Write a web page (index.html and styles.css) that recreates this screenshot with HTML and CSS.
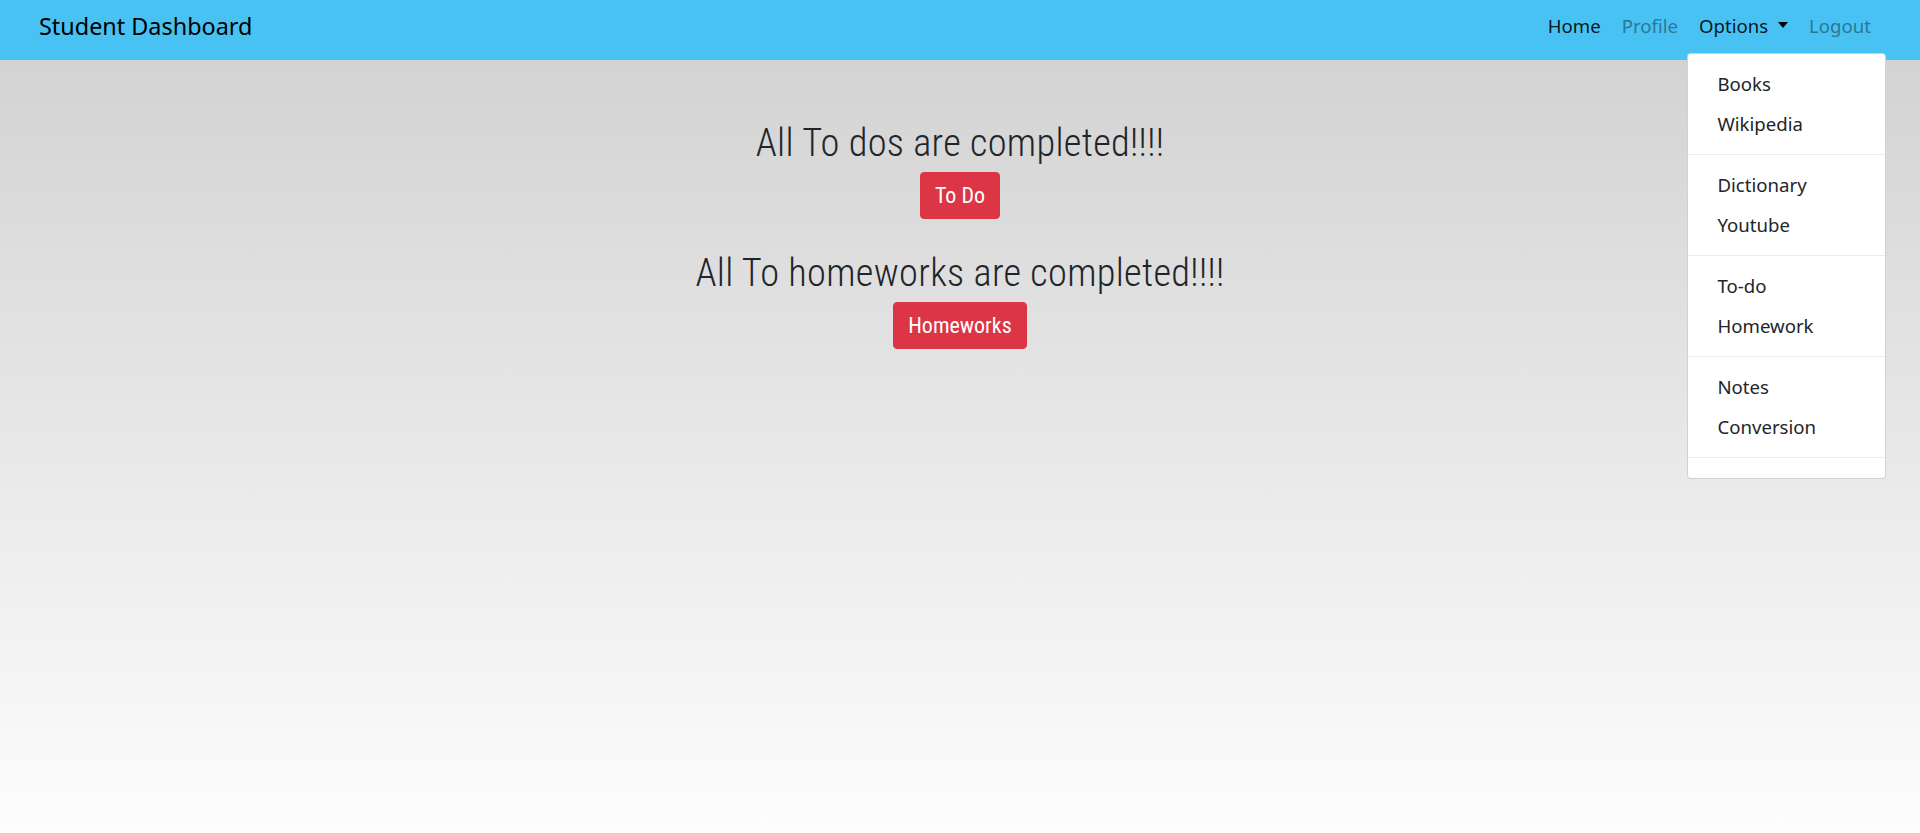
FILE: index.html
```html
<!DOCTYPE html>
<html lang="en">
<head>
<meta charset="utf-8">
<title>Student Dashboard</title>
<link rel="stylesheet" href="styles.css">
</head>
<body>
<nav class="navbar">
  <a class="brand" href="#">Student Dashboard</a>
  <ul class="nav">
    <li class="nav-item"><a class="nav-link active" href="#">Home</a></li>
    <li class="nav-item"><a class="nav-link muted" href="#">Profile</a></li>
    <li class="nav-item dropdown">
      <a class="nav-link active" href="#">Options<span class="caret"></span></a>
      <div class="dropdown-menu">
        <a class="dropdown-item" href="#">Books</a>
        <a class="dropdown-item" href="#">Wikipedia</a>
        <div class="divider"></div>
        <a class="dropdown-item" href="#">Dictionary</a>
        <a class="dropdown-item" href="#">Youtube</a>
        <div class="divider"></div>
        <a class="dropdown-item" href="#">To-do</a>
        <a class="dropdown-item" href="#">Homework</a>
        <div class="divider"></div>
        <a class="dropdown-item" href="#">Notes</a>
        <a class="dropdown-item" href="#">Conversion</a>
        <div class="divider"></div>
      </div>
    </li>
    <li class="nav-item"><a class="nav-link muted" href="#">Logout</a></li>
  </ul>
</nav>
<main class="main">
  <section class="block">
    <h2 class="title">All To dos are completed!!!!</h2>
    <a class="btn" href="#">To Do</a>
  </section>
  <section class="block">
    <h2 class="title">All To homeworks are completed!!!!</h2>
    <a class="btn" href="#">Homeworks</a>
  </section>
</main>
</body>
</html>
```
FILE: styles.css
```css
* { box-sizing: border-box; }
html, body { margin: 0; padding: 0; }
body {
  min-height: 833px;
  background: linear-gradient(to bottom, #d3d3d3 60px, #fdfdfd 833px);
  font-family: "Noto Sans", "Open Sans", sans-serif;
  color: #212529;
}
a { text-decoration: none; }

.navbar {
  height: 60px;
  background: #48c2f3;
  display: flex;
  align-items: stretch;
  justify-content: space-between;
  padding: 0 38.5px 0 29px;
}
.brand {
  display: flex;
  align-items: center;
  padding: 0 10px 8px;
  font-size: 23.4px;
  color: #000;
}
.nav {
  list-style: none;
  margin: 0;
  padding: 0;
  display: flex;
  align-items: stretch;
}
.nav-item {
  position: relative;
  display: flex;
  align-items: stretch;
}
.nav-link {
  display: flex;
  align-items: center;
  padding: 0 10.5px 10px;
  font-size: 18.6px;
}
.nav-link.active { color: rgba(0, 0, 0, 0.9); }
.nav-link.muted { color: #2b7896; }
.caret {
  display: inline-block;
  width: 0;
  height: 0;
  margin-left: 10px;
  margin-top: 0;
  border-top: 6.5px solid #000;
  border-left: 5.8px solid transparent;
  border-right: 5.8px solid transparent;
}

.dropdown-menu {
  position: absolute;
  top: 53px;
  left: -1px;
  width: 199px;
  background: #fff;
  border: 1px solid rgba(0, 0, 0, 0.18);
  border-radius: 4px;
  padding: 10px 0;
  z-index: 10;
}
.dropdown-item {
  display: block;
  height: 40px;
  line-height: 40px;
  padding: 0 29px;
  font-size: 18.6px;
  color: #212529;
}
.divider {
  height: 1px;
  margin: 10px 0;
  background: #e9ecef;
}

.main {
  padding-top: 60px;
  display: flex;
  flex-direction: column;
  align-items: center;
}
.block {
  display: flex;
  flex-direction: column;
  align-items: center;
  margin-bottom: 31px;
}
.title {
  margin: 0 0 6px;
  font-family: "Roboto Condensed", Roboto, sans-serif;
  font-weight: 350;
  font-size: 38.4px;
  line-height: 1.2;
  letter-spacing: 0.3px;
  color: #212529;
}
.btn {
  display: inline-block;
  padding: 7.5px 14px;
  border: 1px solid #dc3545;
  border-radius: 4px;
  background: #dc3545;
  color: #fff;
  font-family: "Roboto Condensed", Roboto, sans-serif;
  font-size: 22px;
  line-height: 30px;
}
```
